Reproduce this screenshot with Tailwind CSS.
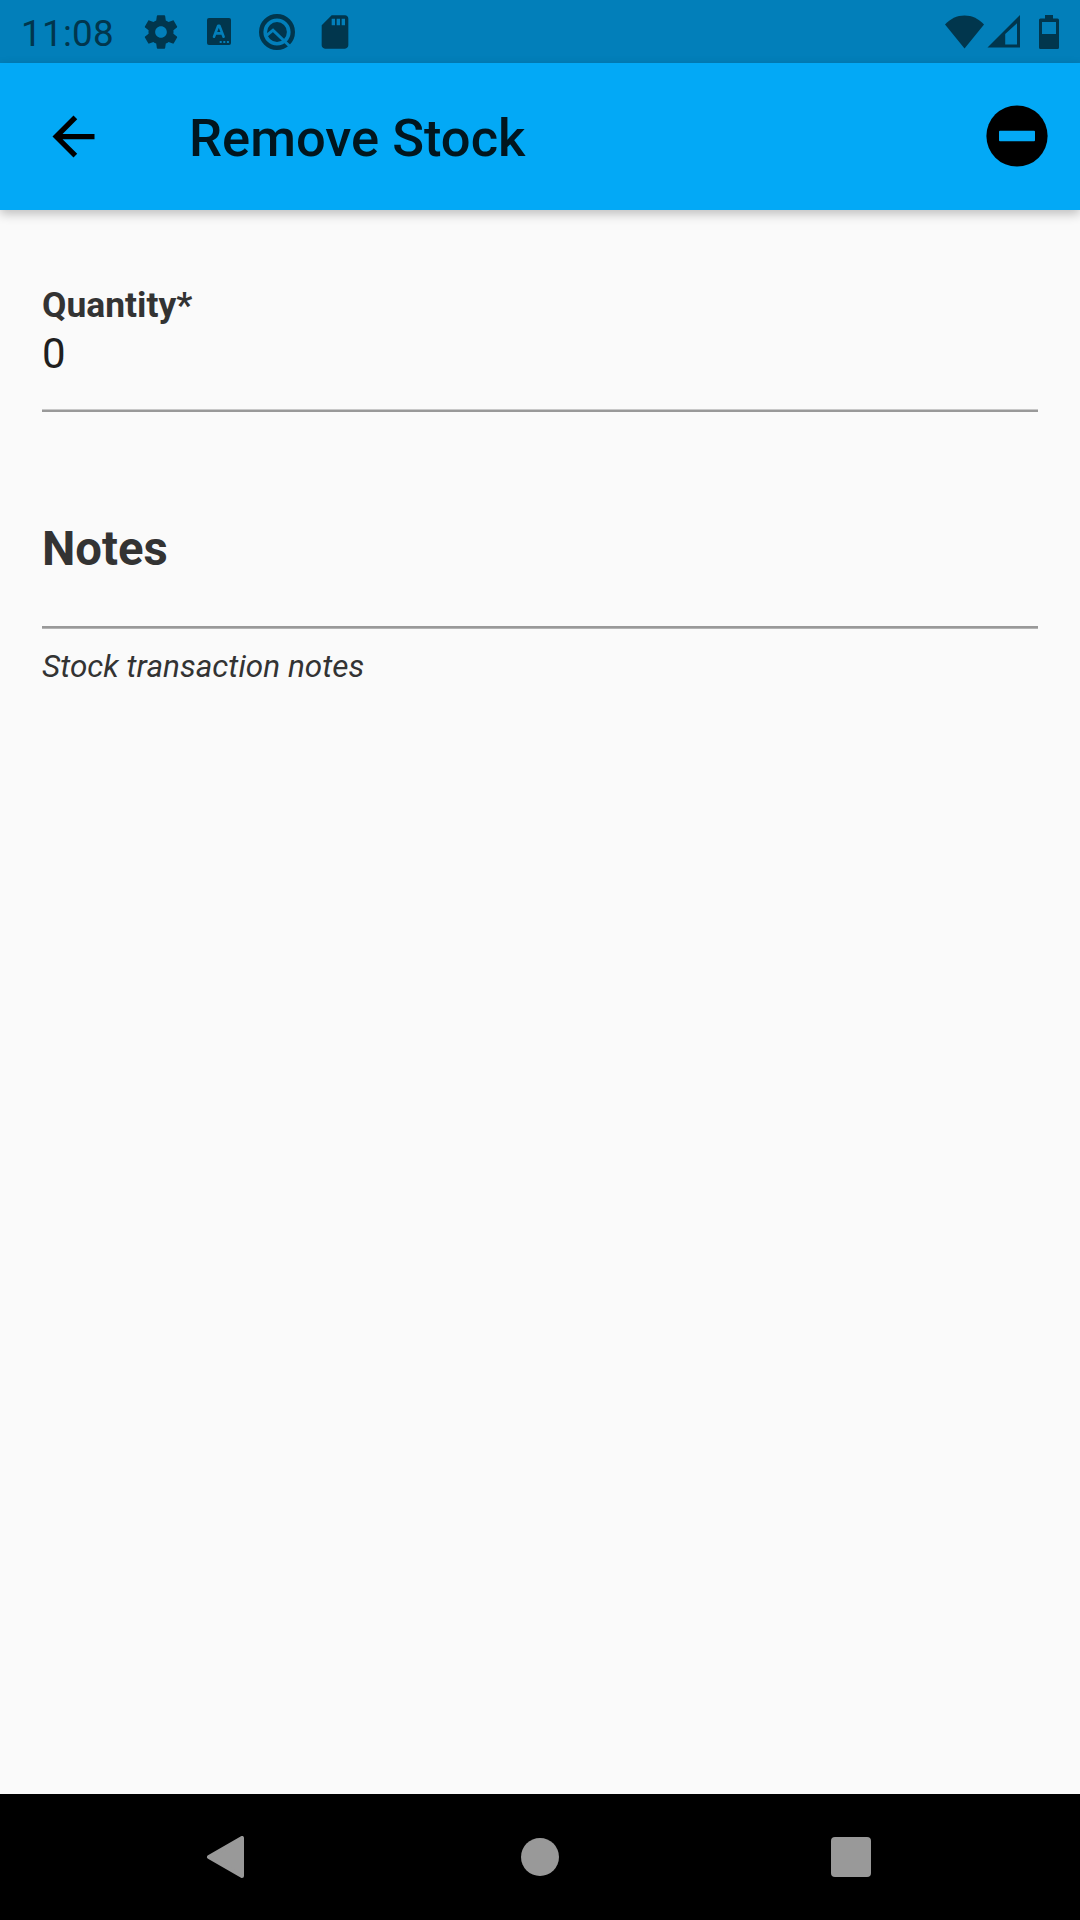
<!DOCTYPE html>
<html lang="en">
<head>
<meta charset="utf-8">
<title>Remove Stock</title>
<script src="https://cdn.jsdelivr.net/npm/@tailwindcss/browser@4"></script>
</head>
<body class="bg-black">
<div class="flex h-[1920px] w-[1080px] flex-col overflow-hidden bg-[#fafafa] font-[Roboto,sans-serif]">
  <!-- Status bar -->
  <div class="flex h-[63px] shrink-0 items-center justify-between bg-[#027fba] pl-[21px] pr-[11px] text-[#01364d]">
    <div class="flex h-full items-center">
      <span class="w-[92px] pt-[4px] text-[36.75px] leading-[43px] tracking-[0.3px]">11:08</span>
      <svg class="ml-[28px] size-[40px]" viewBox="0 0 24 24" fill="currentColor"><path d="M19.43 12.98c.04-.32.07-.64.07-.98s-.03-.66-.07-.98l2.11-1.65c.19-.15.24-.42.12-.64l-2-3.46c-.12-.22-.39-.3-.61-.22l-2.49 1c-.52-.4-1.08-.73-1.69-.98l-.38-2.65C14.46 2.18 14.25 2 14 2h-4c-.25 0-.46.18-.49.42l-.38 2.65c-.61.25-1.17.59-1.69.98l-2.49-1c-.23-.09-.49 0-.61.22l-2 3.46c-.13.22-.07.49.12.64l2.11 1.65c-.04.32-.07.65-.07.98s.03.66.07.98l-2.11 1.65c-.19.15-.24.42-.12.64l2 3.46c.12.22.39.3.61.22l2.49-1c.52.4 1.08.73 1.69.98l.38 2.65c.03.24.24.42.49.42h4c.25 0 .46-.18.49-.42l.38-2.65c.61-.25 1.17-.59 1.69-.98l2.49 1c.23.09.49 0 .61-.22l2-3.46c.12-.22.07-.49-.12-.64l-2.11-1.65zM12 15.5c-1.93 0-3.5-1.57-3.5-3.5s1.57-3.5 3.5-3.5 3.5 1.57 3.5 3.5-1.57 3.5-3.5 3.5z"/></svg>
      <svg class="ml-[26px] h-[27px] w-[24px]" viewBox="0 0 24 27"><rect width="24" height="27" rx="2" fill="currentColor"/><path d="M7 18.7 11.2 7.8h1.2L16.6 18.7M8.6 15.4h6.4" fill="none" stroke="#027fba" stroke-width="2.6" stroke-linecap="round" stroke-linejoin="round"/><path d="M12.7 23h2v2h-2zM16.3 23h2v2h-2zM19.9 23h2v2h-2z" fill="#027fba"/></svg>
      <svg class="ml-[28px] size-[36px]" viewBox="0 0 36 36" fill="none"><circle cx="18" cy="18" r="15.8" stroke="currentColor" stroke-width="4.4"/><circle cx="18" cy="18" r="9.9" fill="currentColor"/><path d="M6.5 22.300l7.500-6.100L31 32.500" stroke="#027fba" stroke-width="3"/></svg>
      <svg class="ml-[20px] size-[40px]" viewBox="0 0 24 24" fill="currentColor"><path d="M18 2h-8L4.020 8 4 20c0 1.100.9 2 2 2h12c1.100 0 2-.9 2-2V4c0-1.100-.9-2-2-2zm-6 6h-2V4h2v4zm3 0h-2V4h2v4zm3 0h-2V4h2v4z"/></svg>
    </div>
    <div class="flex h-full items-center">
      <svg class="h-[34px] w-[39px]" viewBox="0 0 39 34" fill="currentColor"><path d="M0 9.500C5.200 3.800 12 .5 19.500 .5S33.800 3.800 39 9.500L19.500 33.500z"/></svg>
      <svg class="ml-[3px] size-[33px]" viewBox="0 0 33 33" fill="currentColor"><path fill-rule="evenodd" d="M.5 32.500 33 0v32.500zM30 8.200 18.200 19v10.500H30z"/></svg>
      <svg class="ml-[19px] mr-[10px] h-[34px] w-[20px]" viewBox="0 0 20 34" fill="currentColor"><path fill-rule="evenodd" d="M6 0h8v3.500h4.500Q20 3.500 20 5v27.500Q20 34 18.500 34h-17Q0 34 0 32.500V5Q0 3.500 1.500 3.500H6zM3 7v12h14V7z"/></svg>
    </div>
  </div>

  <!-- App bar -->
  <header class="z-10 flex h-[147px] shrink-0 items-center bg-[#03a9f6] pl-[42px] pr-[26px] shadow-[0_4px_10px_rgba(0,0,0,0.24)]">
    <svg class="size-[63px]" viewBox="0 0 24 24" fill="#000"><path d="M20 11H7.830l5.590-5.590L12 4l-8 8 8 8 1.410-1.410L7.830 13H20v-2z"/></svg>
    <h1 class="ml-[84px] flex-1 pt-[3px] text-[52.5px] leading-[62px] font-medium text-[#01161f]">Remove Stock</h1>
    <svg class="mr-[6px] mb-px size-[62px]" viewBox="0 0 62 62"><circle cx="31" cy="31" r="30.600" fill="#000"/><rect x="13" y="25.700" width="36" height="10.600" rx="1" fill="#03a9f6"/></svg>
  </header>

  <!-- Form -->
  <main class="flex flex-1 flex-col px-[42px] pt-[74px]">
    <label class="text-[35.44px] leading-[42px] font-bold text-[#333]">Quantity*</label>
    <div class="mt-[3px] text-[42px] leading-[50px] text-[#1f1f1f]">0</div>
    <div class="mt-[30px] h-[3px] border-t border-[#c8c8c8] bg-[#999]"></div>
    <label class="mt-[109px] text-[47.25px] leading-[56px] font-bold text-[#333]">Notes</label>
    <div class="mt-[49px] h-[3px] border-b border-[#b4b4b4] bg-[#999]"></div>
    <p class="mt-[19px] text-[31.5px] leading-[38px] tracking-[0.02px] text-[#333] italic">Stock transaction notes</p>
  </main>

  <!-- Navigation bar -->
  <nav class="flex h-[126px] shrink-0 items-center bg-black pl-[206px] text-[#999]">
    <svg class="h-[42px] w-[38px]" viewBox="0 0 38 42"><path d="M36 2v38L3 21z" fill="currentColor" stroke="currentColor" stroke-width="4" stroke-linejoin="round"/></svg>
    <div class="ml-[277px] size-[38px] rounded-full bg-[#999]"></div>
    <div class="ml-[272px] size-[40px] rounded-[4px] bg-[#999]"></div>
  </nav>
</div>
</body>
</html>
